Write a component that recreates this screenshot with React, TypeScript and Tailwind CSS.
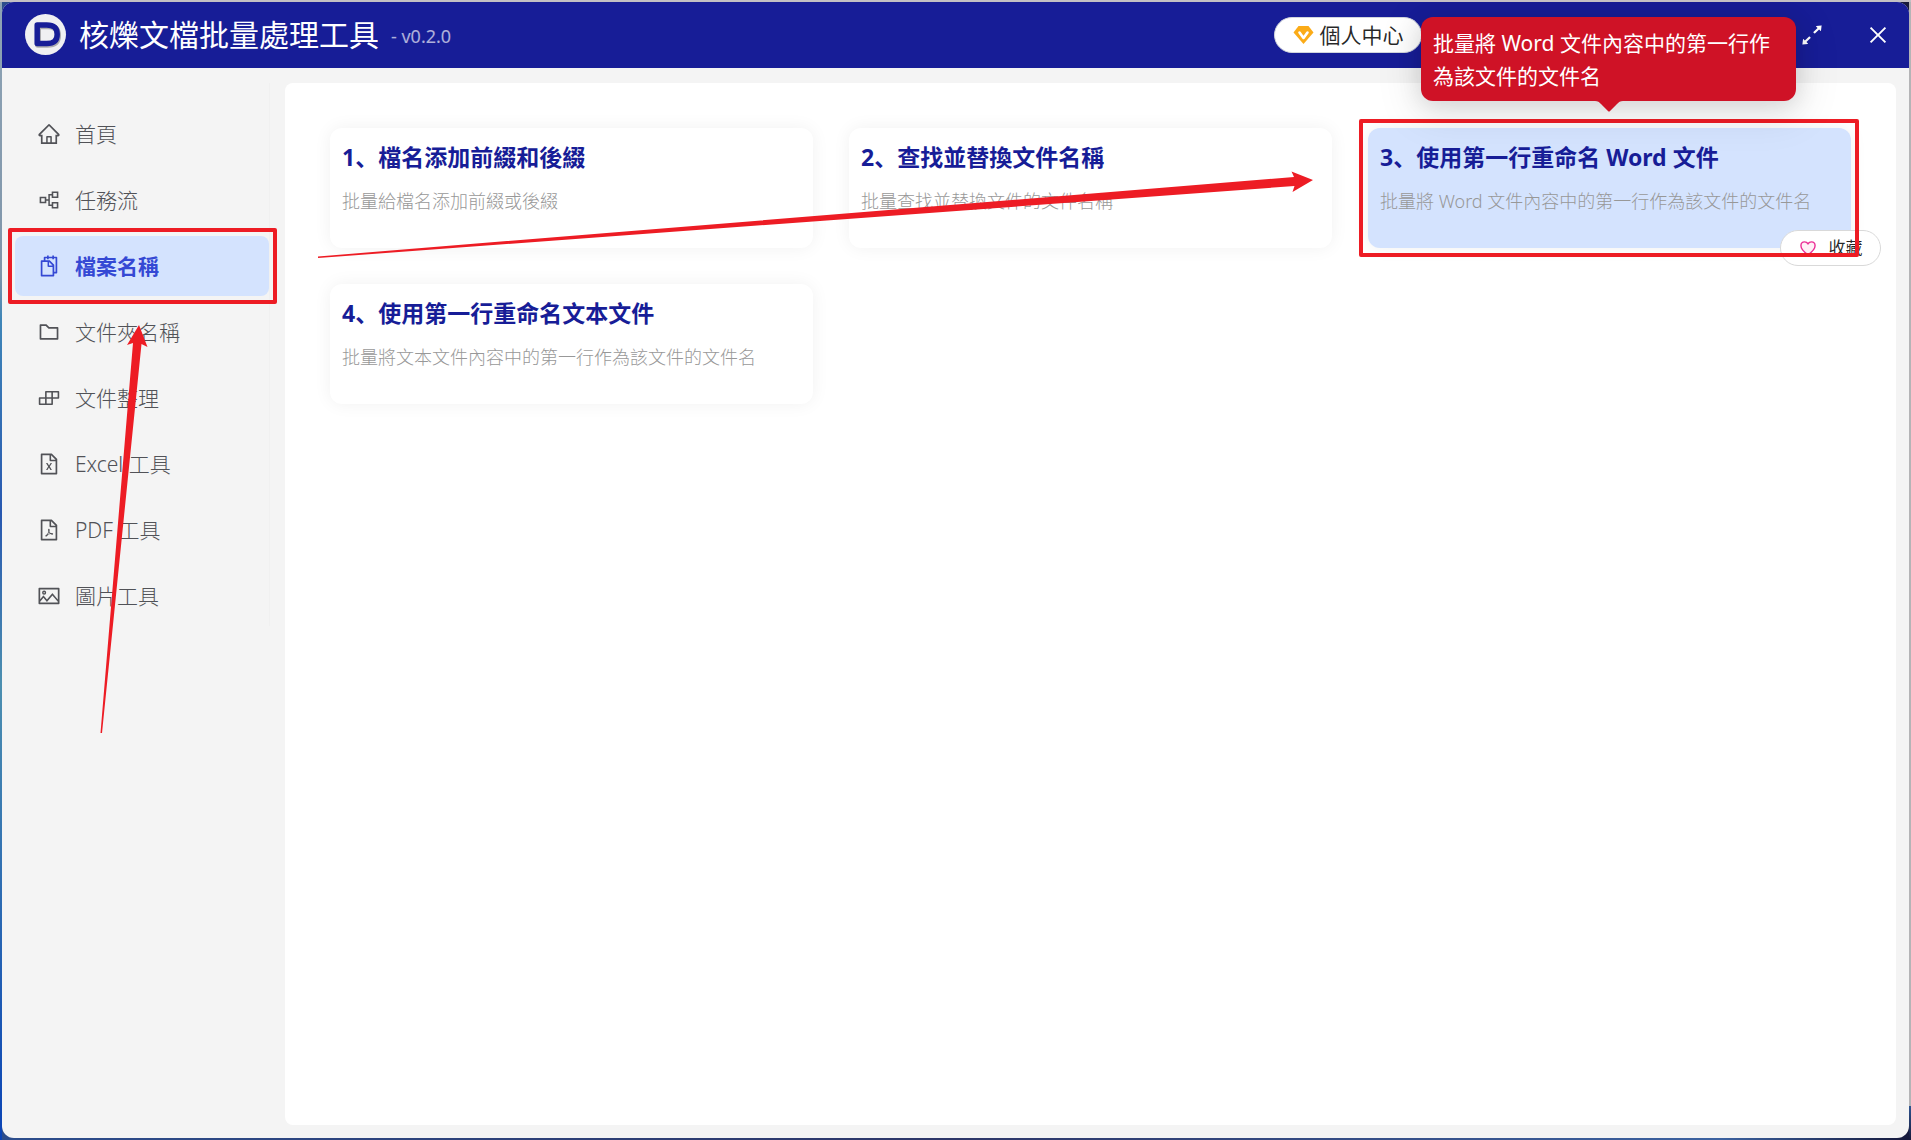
import React from "react";
import type { IconType } from "react-icons";
import {
  AiOutlineArrowsAlt,
  AiOutlineBuild,
  AiOutlineClose,
  AiOutlineFileExcel,
  AiOutlineFilePdf,
  AiOutlineFolder,
  AiOutlineHome,
  AiOutlinePartition,
  AiOutlinePicture,
  AiOutlineSnippets,
} from "react-icons/ai";

type NavItem = { label: string; icon: IconType; active?: boolean };
type Tool = { title: string; desc: string; active?: boolean };

const navItems: NavItem[] = [
  { label: "首頁", icon: AiOutlineHome },
  { label: "任務流", icon: AiOutlinePartition },
  { label: "檔案名稱", icon: AiOutlineSnippets, active: true },
  { label: "文件夾名稱", icon: AiOutlineFolder },
  { label: "文件整理", icon: AiOutlineBuild },
  { label: "Excel 工具", icon: AiOutlineFileExcel },
  { label: "PDF 工具", icon: AiOutlineFilePdf },
  { label: "圖片工具", icon: AiOutlinePicture },
];

const tools: Tool[] = [
  { title: "檔名添加前綴和後綴", desc: "批量給檔名添加前綴或後綴" },
  { title: "查找並替換文件名稱", desc: "批量查找並替換文件的文件名稱" },
  {
    title: "使用第一行重命名 Word 文件",
    desc: "批量將 Word 文件內容中的第一行作為該文件的文件名",
    active: true,
  },
  { title: "使用第一行重命名文本文件", desc: "批量將文本文件內容中的第一行作為該文件的文件名" },
];

function Logo() {
  return (
    <svg viewBox="0 0 42 42" className="size-[42px] shrink-0" aria-hidden="true">
      <circle cx="20.500" cy="20.500" r="20.500" fill="#f0f0f2" />
      <path
        d="M13 12.200h9.500c7 0 10.500 2.800 10.500 9.300s-3.500 9.300-10.500 9.300H13z"
        fill="none"
        stroke="#8d8d92"
        strokeWidth="6"
        strokeLinejoin="round"
        opacity=".7"
      />
      <path
        d="M12.200 11h9.500c7 0 10.500 2.800 10.500 9.300s-3.500 9.300-10.500 9.300h-9.500z"
        fill="none"
        stroke="#171d97"
        strokeWidth="5.500"
        strokeLinejoin="round"
      />
    </svg>
  );
}

function Diamond() {
  return (
    <svg viewBox="0 0 21 20" className="h-5 w-[21px]" aria-hidden="true">
      <path d="M5.500 1h10l5 6.500L10.500 19 .5 7.500z" fill="#fbab17" />
      <path
        d="M6.500 7.500l4 5.500 4-5.500"
        fill="none"
        stroke="#fff"
        strokeWidth="2.600"
        strokeLinecap="round"
        strokeLinejoin="round"
      />
    </svg>
  );
}

function Heart() {
  return (
    <svg viewBox="0 0 1024 1024" className="size-[18px]" aria-hidden="true">
      <path
        d="M512 900C420 835 110 610 110 385c0-125 90-220 208-220 85 0 155 45 194 105 39-60 109-105 194-105 118 0 208 95 208 220 0 225-310 450-402 515z"
        fill="#fff0f6"
        stroke="#eb2f96"
        strokeWidth="80"
      />
    </svg>
  );
}

function Header() {
  return (
    <header className="flex h-[66px] items-center bg-[#171d97] pl-[23px] pr-[19px] text-white">
      <Logo />
      <h1 className="ml-3 text-[30px] leading-[42px]">核爍文檔批量處理工具</h1>
      <span className="ml-3 pt-0.5 text-[18px] text-white/65">- v0.2.0</span>
      <button className="ml-auto mr-[376px] flex h-9 w-[148px] items-center justify-center gap-1.5 rounded-full border border-gray-300 bg-white text-[21px] leading-8 text-black/85">
        <Diamond />
        個人中心
      </button>
      <button aria-label="最大化" className="mr-10">
        <AiOutlineArrowsAlt className="size-7" />
      </button>
      <button aria-label="關閉">
        <AiOutlineClose className="size-6" />
      </button>
    </header>
  );
}

function Sidebar() {
  return (
    <nav className="w-[255px] shrink-0 self-start border-r border-[#f0f0f0] pt-[21px]">
      <ul className="flex flex-col gap-1.5">
        {navItems.map(({ label, icon: Icon, active }) => (
          <li key={label} className="relative">
            <a
              href="#"
              className={
                active
                  ? "flex h-[60px] items-center gap-3.5 rounded-lg bg-[#d4e3fe] pl-[22px] text-[21px] font-bold text-[#3549d4]"
                  : "flex h-[60px] items-center gap-3.5 rounded-lg pl-[22px] text-[21px] font-light text-[#515257]"
              }
            >
              <Icon className="size-6" />
              <span className="pt-0.5">{label}</span>
            </a>
            {active && (
              <div className="pointer-events-none absolute -inset-y-2 -left-[7px] -right-2 rounded-xs border-4 border-[#ed1c24]" />
            )}
          </li>
        ))}
      </ul>
    </nav>
  );
}

function ToolCard({ tool, index }: { tool: Tool; index: number }) {
  return (
    <article
      className={
        tool.active
          ? "relative h-[120px] rounded-xl bg-[#d4e3fe] px-3 pt-[11px] shadow-[0_0_18px_rgba(0,0,0,0.06)]"
          : "relative h-[120px] rounded-xl bg-white px-3 pt-[11px] shadow-[0_0_18px_rgba(0,0,0,0.06)]"
      }
    >
      <h2 className="text-[23px] font-bold leading-9 text-[#171d97]">
        {index + 1}、{tool.title}
      </h2>
      <p className="mt-3 text-[18px] font-light leading-7 text-[#989898]">{tool.desc}</p>
      {tool.active && (
        <>
          <button className="absolute -bottom-[18px] -right-[30px] flex h-9 w-[101px] items-center justify-center gap-3 rounded-full border border-[#d9d9d9] bg-white text-[17px] text-black/85">
            <Heart />
            收藏
          </button>
          <div className="pointer-events-none absolute -inset-y-[9px] -left-[9px] -right-2 rounded-xs border-4 border-[#ed1c24]" />
          <div
            role="tooltip"
            className="absolute bottom-full left-[53px] z-20 mb-[27px] w-[375px] rounded-xl bg-[#cf1226] px-3 pb-2 pt-2.5 text-[21px] leading-[33px] text-white shadow-[0_9px_42px_8px_rgba(0,0,0,0.08),0_4px_24px_rgba(0,0,0,0.12)]"
          >
            {tool.desc}
            <svg
              viewBox="0 0 28 12"
              className="absolute left-1/2 top-full h-3 w-7 -translate-x-1/2"
              aria-hidden="true"
            >
              <path d="M0 0c3 0 4 1 6 3l7 7c1 1 1 1 2 0l7-7c2-2 3-3 6-3z" fill="#cf1226" />
            </svg>
          </div>
        </>
      )}
    </article>
  );
}

function Arrows() {
  return (
    <svg
      viewBox="0 0 1320 740"
      className="pointer-events-none absolute left-0 top-0 z-10 h-[740px] w-[1320px]"
      fill="#ed1c24"
      aria-hidden="true"
    >
      <path d="M100.500 733L133 343l-6 2 12-20 8.500 22-6-3L102 733z" />
      <path d="M318 256.500L1294 177l-2.500-5.500 21.500 8.500-20.500 12 2-6L318 258z" />
    </svg>
  );
}

export default function App() {
  return (
    <div className="relative flex min-h-screen bg-[linear-gradient(#c3c0c4,#c3c0c4),linear-gradient(#8fa4b5,#7f95aa_24%,#3f86b8_28%,#2858b0_45%,#4c8fb0_60%,#0a43b5),linear-gradient(#b4b4b6,#b4b4b6_97%,#2f5590_97%,#15183a),linear-gradient(90deg,#2c4d8c,#2d3668_50%,#3c62a0_90%,#15183a)] bg-[length:100%_2px,2px_100%,2px_100%,100%_100%] bg-[position:0_0,0_0,100%_0,0_0] bg-no-repeat p-0.5 font-['Noto_Sans','Noto_Sans_CJK_SC',sans-serif]">
      <div className="flex flex-1 flex-col overflow-hidden rounded-xl bg-[#f4f4f4]">
        <Header />
        <div className="flex flex-1 px-[13px] pb-[13px] pt-[15px]">
          <Sidebar />
          <main className="ml-[15px] flex-1 rounded-lg bg-white p-[45px]">
            <div className="grid grid-cols-3 gap-9">
              {tools.map((tool, i) => (
                <ToolCard key={tool.title} tool={tool} index={i} />
              ))}
            </div>
          </main>
        </div>
      </div>
      <Arrows />
    </div>
  );
}
